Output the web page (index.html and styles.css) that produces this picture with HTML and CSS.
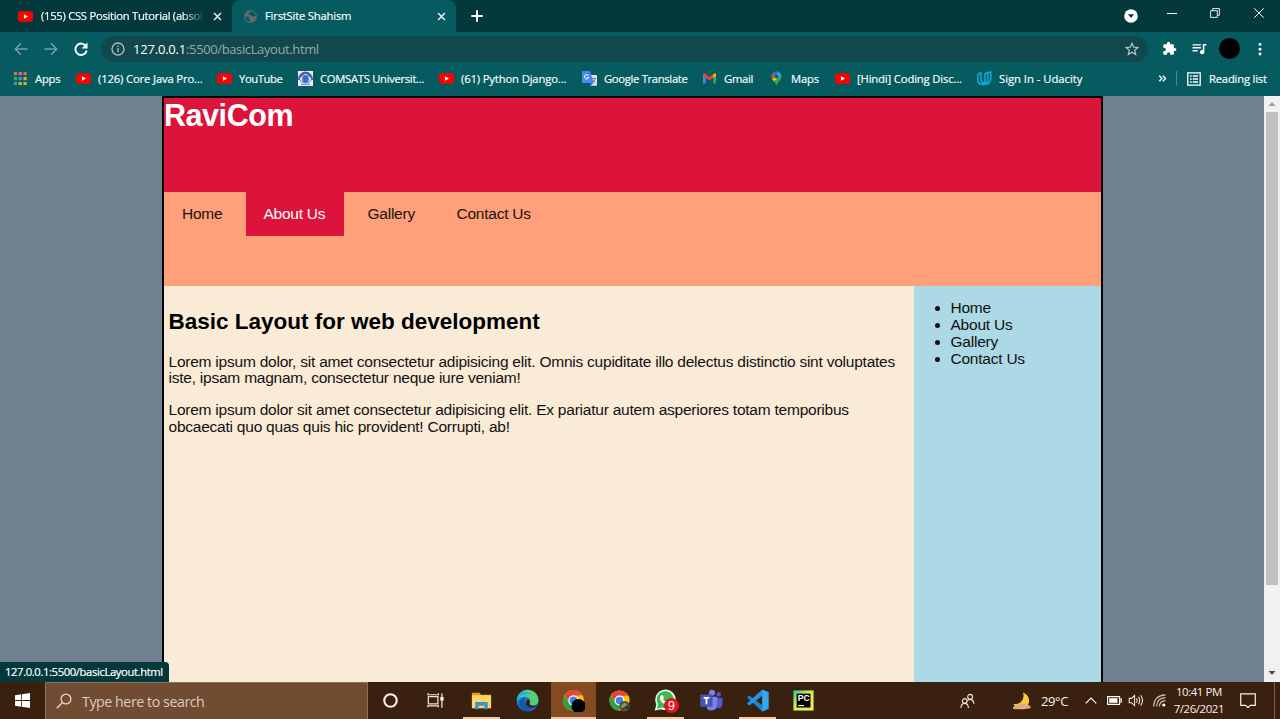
FILE: index.html
```html
<!DOCTYPE html>
<html lang="en">
<head>
<meta charset="utf-8">
<title>FirstSite Shahism</title>
<link rel="stylesheet" href="styles.css">
</head>
<body>
<svg class="defs" width="0" height="0">
  <symbol id="yt" viewBox="0 0 16 16"><rect y="2.4" width="16" height="11.2" rx="3" fill="#f00"/><path d="M6.3 5.5v5l4.3-2.5z" fill="#fff"/></symbol>
  <symbol id="close" viewBox="0 0 10 10"><path d="M1.2 1.2l7.6 7.6M8.8 1.2L1.2 8.8" stroke="#e8f0f0" stroke-width="1.7"/></symbol>
  <symbol id="chrome" viewBox="0 0 24 24"><circle cx="12" cy="12" r="11" fill="#fbc116"/><path d="M2.5 6.5A11 11 0 0 1 21.5 6.5L12 7 7.7 14.5z" fill="#e04a3a"/><path d="M2.500 6.500L7.500 15 12 17.200 16.200 14.500 11 23A11 11 0 0 1 2.500 6.500z" fill="#2da04e"/><circle cx="12" cy="12" r="5.400" fill="#fff"/><circle cx="12" cy="12" r="4.100" fill="#3f82ee"/></symbol>
</svg>
<div class="screen">
  <header class="browser">
    <div class="tabs">
      <div class="tab tab-idle">
        <svg class="ico15"><use href="#yt"/></svg>
        <span class="tab-title fade">(155) CSS Position Tutorial (absol</span>
        <svg class="x"><use href="#close"/></svg>
      </div>
      <div class="tab tab-active">
        <svg class="ico15 globe" viewBox="0 0 16 16"><circle cx="8" cy="8" r="6.900" fill="#616b70"/><path d="M2.400 7.600c2.800.1 4.800.5 4.500 2.200-.2 1 .8 1 .5 3.600C4.700 13.500 2.300 11 2.400 7.600zM8.500 2.300c-1.700.6-.6 2-2.300 2.500-.8.300-.2 1.800 1.200 1.700 1.600-.1 1.600 1.700 3.300 1.500 1.300-.1 1.700-.7 2.900-.6C13.500 4.400 11.300 2.300 8.500 2.300z" fill="#075b60"/></svg>
        <span class="tab-title">FirstSite Shahism</span>
        <svg class="x"><use href="#close"/></svg>
      </div>
      <svg class="plus" viewBox="0 0 12 12"><path d="M6 .3v11.400M.3 6h11.400" stroke="#fff" stroke-width="1.900"/></svg>
      <svg class="win-search" viewBox="0 0 14 14"><circle cx="7" cy="7" r="6.800" fill="#fff"/><path d="M3.900 5.200h6.200L7 9.100z" fill="#043a3e"/></svg>
      <svg class="win-min" viewBox="0 0 10 10"><path d="M0 4.500h10" stroke="#fff"/></svg>
      <svg class="win-max" viewBox="0 0 10 10"><path d="M.6 2.700h6.700v6.700H.6zM2.700 2.500V.6h6.700v6.700H7.500" fill="none" stroke="#fff" stroke-width=".9"/></svg>
      <svg class="win-close" viewBox="0 0 10 10"><path d="M.3.3l9.400 9.400M9.700.3L.3 9.700" stroke="#fff"/></svg>
    </div>
    <div class="toolbar">
      <svg class="nav" viewBox="0 0 14 14"><path d="M13.500 7H1.300M7 1.200L1.200 7 7 12.800" fill="none" stroke="#6f9fa2" stroke-width="1.500"/></svg>
      <svg class="nav" viewBox="0 0 14 14"><path d="M.5 7h12.200M7 1.200L12.800 7 7 12.800" fill="none" stroke="#6f9fa2" stroke-width="1.500"/></svg>
      <svg class="nav" viewBox="0 0 14 14"><path d="M12 4.300A5.700 5.700 0 1 0 12.700 8.500" fill="none" stroke="#fff" stroke-width="1.900"/><path d="M13.500.4v6H7.600z" fill="#fff"/></svg>
      <div class="omnibox">
        <svg class="info" viewBox="0 0 14 14"><circle cx="7" cy="7" r="6" fill="none" stroke="#a9bdbf" stroke-width="1.300"/><path d="M7 6v4.300M7 3.500v1.400" stroke="#a9bdbf" stroke-width="1.400"/></svg>
        <span class="url"><b>127.0.0.1</b>:5500/basicLayout.html</span>
        <svg class="star" viewBox="0 0 14 14"><path d="M7 1.300l1.700 3.900 4.200.3-3.200 2.800 1 4.100L7 10.200l-3.700 2.200 1-4.100L1.100 5.500l4.200-.3z" fill="none" stroke="#b6c8ca" stroke-width="1.200"/></svg>
      </div>
      <svg class="puzzle" viewBox="0 0 24 24"><path d="M20.500 11H19V7a2 2 0 0 0-2-2h-4V3.500a2.500 2.500 0 0 0-5 0V5H4a2 2 0 0 0-2 2v3.800h1.500a2.700 2.700 0 0 1 0 5.400H2V20a2 2 0 0 0 2 2h3.800v-1.500a2.700 2.700 0 0 1 5.400 0V22H17a2 2 0 0 0 2-2v-4h1.500a2.500 2.500 0 0 0 0-5z" fill="#fff"/></svg>
      <svg class="queue" viewBox="0 0 16 13"><path d="M.5 2h9M.5 5.200h9M.5 8.400h5.500" stroke="#fff" stroke-width="1.500"/><path d="M12.400 10V1.900h3" fill="none" stroke="#fff" stroke-width="1.700"/><circle cx="10.800" cy="10" r="2.300" fill="#fff"/></svg>
      <span class="avatar"></span>
      <svg class="kebab" viewBox="0 0 4 14"><circle cx="2" cy="2.400" r="1.450" fill="#fff"/><circle cx="2" cy="7.200" r="1.450" fill="#fff"/><circle cx="2" cy="12" r="1.450" fill="#fff"/></svg>
    </div>
    <div class="bookmarks">
      <svg class="ico15" viewBox="0 0 15 15"><path d="M.8 1h3.300v3.300H.8zM5.600 1h3.300v3.300H5.600zM10.400 1h3.300v3.300h-3.300z" fill="#d96a5e"/><path d="M.8 6h3.300v3.300H.8zM.8 11h3.300v3H.8z" fill="#3ca36b"/><path d="M5.600 6h3.300v3.300H5.600z" fill="#359be0"/><path d="M10.400 6h3.300v3.300h-3.300zM5.600 11h3.300v3H5.600zM10.400 11h3.300v3h-3.300z" fill="#d8ad30"/></svg>
      <span class="bm bm-apps">Apps</span>
      <svg class="ico15"><use href="#yt"/></svg><span class="bm bm-java">(126) Core Java Pro...</span>
      <svg class="ico15"><use href="#yt"/></svg><span class="bm bm-yt">YouTube</span>
      <svg class="ico15" viewBox="0 0 15 15"><path d="M0 0h15v15H0z" fill="#eef1f8"/><path d="M1.300 9a6.200 7.200 0 0 1 12.400 0" fill="none" stroke="#56549b" stroke-width="2.600"/><ellipse cx="7.500" cy="8" rx="6" ry="3.600" fill="#dfe9f8" stroke="#4b74c4"/><circle cx="7.500" cy="8" r="3.300" fill="#326fc2"/><path d="M3 13.300h9" stroke="#8a96c8" stroke-width="1.500"/></svg><span class="bm bm-com">COMSATS Universit...</span>
      <svg class="ico15"><use href="#yt"/></svg><span class="bm bm-py">(61) Python Django...</span>
      <svg class="ico15" viewBox="0 0 15 15"><path d="M6 4h8.200q.8 0 .8.800V14q0 .8-.8.800H8.500z" fill="#dce1e5"/><path d="M.8 0H8l3.600 12H.8Q0 12 0 11.200V.8Q0 0 .8 0z" fill="#4b87ed"/><path d="M6.500 4.700A2.200 2.200 0 1 0 6.700 6.500H4.700" fill="none" stroke="#fff"/><path d="M9.500 7.500h4.500M11.700 6.500v1M13 7.500q-.7 3-2.500 4M10.500 8.500q1 2 3 3" fill="none" stroke="#66808c" stroke-width=".9"/><path d="M8.500 14.800l3-2.800H7.700z" fill="#315ebd"/></svg><span class="bm bm-tr">Google Translate</span>
      <svg class="ico15" viewBox="0 0 15 15"><path d="M1 4v8.500h2.700V5z" fill="#4285f4"/><path d="M11.300 5v7.500H14V4z" fill="#34a853"/><path d="M1 4.500V3.200Q1.500 1.700 3 2.600l4.500 3.500L12 2.600v3.500L7.500 9.500 3.500 6.400z" fill="#ea4335"/><path d="M11.300 3.200Q14 1 14 3.500V5l-2.700 2z" fill="#fbbc04"/></svg><span class="bm bm-gm">Gmail</span>
      <svg class="ico15" viewBox="0 0 15 15"><path d="M7.500.5A5 5 0 0 0 2.500 5.500C2.500 9 6.500 11 7.500 14.700 8.500 11 12.500 9 12.500 5.500A5 5 0 0 0 7.500.5z" fill="#34a853"/><path d="M3.700 2.300L6 4.300 3.200 8A5 5 0 0 1 3.700 2.300z" fill="#ea4335"/><path d="M3.700 2.300A5 5 0 0 1 9.500.9L6 4.700z" fill="#1a73e8"/><path d="M9.500.9A5 5 0 0 1 12 3.500L8.800 7 7.500 4z" fill="#4a91f4"/><path d="M6 6.500L8 8.200 4.600 10 3.200 8z" fill="#fbbc04"/><circle cx="7.500" cy="5.400" r="1.700" fill="#075b60"/></svg><span class="bm bm-mp">Maps</span>
      <svg class="ico15"><use href="#yt"/></svg><span class="bm bm-hi">[Hindi] Coding Disc...</span>
      <svg class="ico15" viewBox="0 0 15 15"><path d="M.9 3.300l3-1.500v7q.1 2.900 2.900 3.300-1.200 1.500-3 1.100Q.9 12.800.9 9.300zM8 2.500l2.900-.8v6.800q-.1 3.400-4 3.600Q8 10.800 8 9zM10.900 1.700l2.900-.8v6.700q-.2 5.500-6.800 6-2 0-3.200-.6" fill="none" stroke="#17a7dc" stroke-width="1.500"/></svg><span class="bm bm-ud">Sign In - Udacity</span>
      <svg class="chev" viewBox="0 0 9 8"><path d="M.8.9L3.900 4 .8 7.100M4.900.9L8 4 4.900 7.100" fill="none" stroke="#fff" stroke-width="1.500"/></svg>
      <i class="sep"></i>
      <svg class="readicon" viewBox="0 0 14 14"><path d="M.8.8h12.400v12.400H.8z" fill="none" stroke="#fff" stroke-width="1.300"/><path d="M3 4h1.700M3 7h1.700M3 10h1.700M5.800 4H11M5.800 7H11M5.800 10H11" stroke="#fff" stroke-width="1.400"/></svg>
      <span class="bm">Reading list</span>
    </div>
  </header>

  <div class="viewport">
    <div class="page">
      <div class="banner"><h1>RaviCom</h1></div>
      <nav class="menu">
        <a class="m-home">Home</a><a class="m-about current">About Us</a><a class="m-gal">Gallery</a><a class="m-con">Contact Us</a>
      </nav>
      <div class="columns">
        <main>
          <h2>Basic Layout for web development</h2>
          <p>Lorem ipsum dolor, sit amet consectetur adipisicing elit. Omnis cupiditate illo delectus distinctio sint voluptates<br>iste, ipsam magnam, consectetur neque iure veniam!</p>
          <p>Lorem ipsum dolor sit amet consectetur adipisicing elit. Ex pariatur autem asperiores totam temporibus<br>obcaecati quo quas quis hic provident! Corrupti, ab!</p>
        </main>
        <aside><ul><li>Home</li><li>About Us</li><li>Gallery</li><li>Contact Us</li></ul></aside>
      </div>
    </div>
    <div class="scrollbar">
      <svg viewBox="0 0 16 16"><path d="M4.500 10h7L8 6z" fill="#a0a0a0"/></svg>
      <i class="thumb"></i>
      <svg viewBox="0 0 16 16"><path d="M4.500 5h7L8 9z" fill="#505050"/></svg>
    </div>
    <div class="status">127.0.0.1:5500/basicLayout.html</div>
  </div>

  <footer class="taskbar">
    <div class="start"><svg viewBox="0 0 15 15" width="15" height="15"><path d="M0 2.200L6.200 1.300V7.100H0zM7 1.200L15 0v7.100H7zM0 7.900h6.200v5.800L0 12.800zM7 7.900h8V15l-8-1.200z" fill="#fff"/></svg></div>
    <div class="search"><svg viewBox="0 0 16 16" width="16" height="16"><circle cx="10" cy="6" r="4.900" fill="none" stroke="#e9dcd2" stroke-width="1.200"/><path d="M6.500 9.500L.8 15.200" stroke="#e9dcd2" stroke-width="1.300"/></svg><span>Type here to search</span></div>
    <div class="app"><svg viewBox="0 0 24 24"><circle cx="12" cy="12" r="6.500" fill="none" stroke="#f6efe9" stroke-width="2.200"/></svg></div>
    <div class="app"><svg viewBox="0 0 24 24"><path d="M4.500 8h10v7.500h-10zM4 4.500v1.500h11V4.500M4 19v-1.500h11V19M18.700 4.500v15" fill="none" stroke="#eee3da" stroke-width="1.300"/><path d="M17 8.500h3.500v3.500H17z" fill="#fff"/></svg></div>
    <div class="app open"><svg viewBox="0 0 24 24"><path d="M2 4h8l1.500 2H22v14H2z" fill="#dfa022"/><path d="M2 6.500h20V20H2z" fill="#fbd568"/><path d="M5.500 21v-7.500h13V21H15v-3.500H9V21z" fill="#3b91d0"/></svg></div>
    <div class="app"><svg viewBox="0 0 24 24"><circle cx="12" cy="12" r="11.300" fill="#167bc8"/><path d="M1 10A11.300 11.300 0 0 1 23.300 12c0 4-4 5.500-7.500 4.500-2-.7-1-2-1-3.500 0-3.500-4-5.500-8-4.500Q3 9 1 13z" fill="#39c5bb"/><path d="M12 .7A11.300 11.300 0 0 1 23.300 12c0 4-4 5.500-7.500 4.500-1.800-.6-1-2-1-3.500C14.800 8 12 5 8 1.500z" fill="#55cf75"/><path d="M1 10.500C3 3 12 1 16.500 6 12 3.500 3 5 1 12z" fill="#28a8df"/><path d="M10.500 9C7 13 10 20.500 18.500 19.300 15 24 8 24.500 4.500 20 1 14 5 9 10.500 9z" fill="#105aa8"/><path d="M11 12c1.500-2.500 3.500-1 3.600.7-.1 2-1 3 .6 4.200 2.500 1.600 5.700.9 7.500-.6-2 3.200-5 3.700-7.500 3.300-4.600-.8-6-4.500-4.200-7.600z" fill="#3b2312"/></svg></div>
    <div class="app open focused"><svg viewBox="0 0 24 24"><use href="#chrome"/><circle cx="17.200" cy="17.800" r="7.400" fill="#000"/></svg></div>
    <div class="app"><svg viewBox="0 0 24 24"><use href="#chrome" width="23" height="23" x=".5" y=".5"/><circle cx="17.300" cy="18" r="5.500" fill="#524d2a"/><path d="M13 18l4-4 3 2-2 6" fill="#87955b"/><path d="M14 21l6-4 2 3" fill="#253524"/></svg></div>
    <div class="app open whats"><svg viewBox="0 0 24 24"><path d="M.8 22.500l1.700-6.300A10.700 10.700 0 1 1 7.500 21z" fill="#f4fff4"/><path d="M3 20.500l1.300-4.500A8.900 8.900 0 1 1 8.200 19.300z" fill="#37bd4c"/><path d="M7.200 6.700l2-.2 1.200 3-1 1.300q1.300 2.300 3.700 3.200l1.400-1.500 2.700 1.400q0 2.700-3 2.900Q7 15.500 6.200 9.500q0-1.800 1-2.800z" fill="#fff"/></svg><b class="badge">9</b></div>
    <div class="app"><svg viewBox="0 0 24 24"><circle cx="12.500" cy="4" r="3.200" fill="#7b83eb"/><circle cx="19.500" cy="5.500" r="2.300" fill="#5059c9"/><path d="M15 9h8.500v6q-.2 5-4.500 5-3 0-4-2z" fill="#5059c9"/><path d="M7 8h11v8q-.5 6.500-6 6.500T7 17z" fill="#7b83eb"/><rect x=".3" y="5.700" width="12.800" height="12.800" rx="1" fill="#4a54b8"/><path d="M3.800 9.300h6M6.800 9.300v6.500" stroke="#fff" stroke-width="1.900"/></svg></div>
    <div class="app open"><svg viewBox="0 0 24 24"><path d="M17 .5L23.500 3.500v17L17 23.500 1 8.800 3.500 6.800 17 17z" fill="#1687cf"/><path d="M17 .5L1 15.200l2.500 2L17 7z" fill="#2196dc"/><path d="M17 .5l6.500 3v17l-6.500 3z" fill="#36a7ed"/></svg></div>
    <div class="app"><svg viewBox="0 0 24 24"><defs><linearGradient id="pc" x1="0" y1="0" x2="1" y2="1"><stop stop-color="#27d28a"/><stop offset=".4" stop-color="#c8ed54"/><stop offset="1" stop-color="#f5ee55"/></linearGradient></defs><path d="M1.500 1.500h21v21h-21z" fill="url(#pc)"/><path d="M4.800 4.800h14.500v14.500H4.800z"/><path d="M6.500 17.300h6" stroke="#fff" stroke-width="1.200"/><text x="6" y="12.800" class="pc">PC</text></svg></div>
    <div class="tray">
      <svg class="people" viewBox="0 0 16 16"><g fill="none" stroke="#efe5de" stroke-width="1.200"><circle cx="5" cy="8" r="2.500"/><path d="M1 15.500q.3-5 4-5t4 5"/><circle cx="10.800" cy="3.500" r="2.600"/><path d="M7.800 8q1-1.700 2.900-1.700 3.700 0 4.200 4.700"/></g></svg>
      <svg class="moon" viewBox="0 0 20 18"><path d="M11 .5c8 3 8 13 1 15.500-5 1.500-9.500-1-10.500-4C9 13 13 7 11 .5z" fill="#fccb36"/><path d="M1 17q-.5-3 3-3 1-2.500 4-1.500 2-2 5 .2 4-.8 6 3-4 2-18 1.300z" fill="#d9ad86"/></svg>
      <span class="temp">29°C</span>
      <svg class="up" viewBox="0 0 12 7"><path d="M.7 6.300L6 1l5.300 5.300" fill="none" stroke="#fff" stroke-width="1.200"/></svg>
      <svg class="battery" viewBox="0 0 15 9"><path d="M.6.6h12v7.800H.6zM13 3h1.300v3H13" fill="none" stroke="#fff" stroke-width="1.100"/><path d="M2.200 2.200h8.300v4.600H2.200z" fill="#fff"/></svg>
      <svg class="sound" viewBox="0 0 16 14"><path d="M.7 4.700h2.500L6.500 1.500v11L3.200 9.300H.7zM8.500 4.700q1.400 2.300 0 4.600M10.700 3q2.600 4 0 8M13 1.300q4 5.700 0 11.400" fill="none" stroke="#f5eee9" stroke-width="1.100"/></svg>
      <svg class="wifi" viewBox="0 0 13 13"><g fill="none" stroke="#cdbfb5" stroke-width="1.200"><path d="M.7 12.500Q1 1.500 12.500.9M3.600 12.500Q3.800 4.200 12.500 3.700M6.400 12.500Q6.500 7 12.500 6.600"/></g><circle cx="10.800" cy="11" r="1.600" fill="#fff"/></svg>
      <div class="clock"><span>10:41 PM</span><span>7/26/2021</span></div>
      <svg class="note" viewBox="0 0 16 16"><path d="M.7.9h14.600v11.500h-5L8 14.700l-2.300-2.300h-5z" fill="none" stroke="#f7efea" stroke-width="1.200"/></svg>
      <i class="peek"></i>
    </div>
  </footer>
</div>
</body>
</html>
```
FILE: styles.css
```css
* { box-sizing: border-box; }
body { margin: 0; overflow: hidden; font-family: "Open Sans", "Noto Sans", sans-serif; }
svg { display: block; flex: none; }
.defs { position: absolute; }
.screen { width: 1280px; height: 719px; display: flex; flex-direction: column; }

/* browser chrome */
.browser { height: 96px; background: #055b60; color: #f4fafa; flex: none; }
.tabs { height: 32px; background: #03393d; display: flex; align-items: center; }
.tab { display: flex; align-items: center; height: 32px; font-size: 11.25px; letter-spacing: -.2px; }
.tab-idle { width: 232px; padding-left: 18px; border-bottom-right-radius: 7px; }
.tab-active { width: 224px; padding-left: 11px; background: #055b60; border-radius: 8px 8px 0 0; }
.ico15 { width: 15px; height: 15px; margin-right: 7px; }
.tab-title { width: 165px; overflow: hidden; white-space: nowrap; flex: none; margin: 0 7px 2px 0; -webkit-text-stroke: .2px; }
.tab-idle .tab-title { margin-left: 1px; letter-spacing: -.28px; }
.fade { -webkit-mask-image: linear-gradient(90deg, #000 86%, transparent 99%); mask-image: linear-gradient(90deg, #000 86%, transparent 99%); }
.x { width: 9px; height: 9px; }
.plus { width: 12px; height: 12px; margin-left: 15px; }
.win-search { width: 14px; height: 14px; margin-left: 641px; }
.win-min { width: 10px; height: 10px; margin: -5px 0 0 29px; }
.win-max { width: 10px; height: 10px; margin: -6px 0 0 33px; }
.win-close { width: 10px; height: 10px; margin: -6px 0 0 34px; }
.toolbar { height: 33px; display: flex; align-items: center; padding-left: 14px; }
.nav { width: 14px; height: 14px; margin-right: 16px; }
.omnibox { width: 1047px; height: 26px; margin-left: -3px; border-radius: 13px; background: #10484d; display: flex; align-items: center; padding: 0 9px 0 10px; }
.info { width: 14px; height: 14px; margin-right: 8px; }
.url { flex: 1; font-size: 13px; color: #93aaac; letter-spacing: -.38px; }
.url b { font-weight: 400; color: #fff; letter-spacing: -.2px; }
.star { width: 14px; height: 14px; }
.puzzle { width: 15px; height: 15px; margin-left: 14px; }
.queue { width: 15px; height: 12px; margin-left: 15px; }
.avatar { width: 21px; height: 21px; border-radius: 50%; background: #000; margin-left: 12px; }
.kebab { width: 4px; height: 14px; margin-left: 18px; }
.bookmarks { height: 28px; display: flex; align-items: center; padding: 0 0 1px 13px; }
.bm { font-size: 11.25px; letter-spacing: -.2px; white-space: nowrap; flex: none; margin-bottom: 1px; -webkit-text-stroke: .2px; }
.bm-apps { width: 41px; }
.bm-java { width: 119px; letter-spacing: -.14px; }
.bm-yt { width: 59px; letter-spacing: -.4px; }
.bm-com { width: 119px; letter-spacing: -.3px; }
.bm-py { width: 121px; letter-spacing: -.14px; }
.bm-tr { width: 98px; letter-spacing: -.32px; }
.bm-gm { width: 45px; letter-spacing: -.3px; }
.bm-mp { width: 44px; }
.bm-hi { width: 120px; letter-spacing: -.15px; }
.bm-ud { width: 159px; letter-spacing: -.02px; }
.chev { width: 9px; height: 7px; }
.sep { width: 1px; height: 15px; background: #4b898c; margin: 0 10px 0 9px; }
.readicon { width: 14px; height: 14px; margin-right: 8px; }

/* document */
.viewport { height: 586px; display: flex; position: relative; background: #708090; overflow: hidden; flex: none; font-family: "Liberation Sans", Arial, sans-serif; }
.page { width: 941px; height: 700px; margin-left: 162px; border: 2px solid #000; flex: none; }
.banner { height: 94px; background: #dc143c; }
h1 { margin: 0; font-size: 30.5px; line-height: 34px; letter-spacing: -.45px; color: #fff; }
.menu { height: 93.500px; background: #ffa07a; display: flex; align-items: flex-start; font-size: 15.5px; letter-spacing: -.24px; color: #201410; }
.menu a { height: 44px; line-height: 44px; padding-left: 18px; white-space: nowrap; }
.m-home { width: 81.500px; }
.m-about { width: 98.500px; }
.m-gal { width: 89px; margin-left: 5.500px; }
.m-con { width: 110px; }
.menu .current { background: #dc143c; color: #fff; }
.columns { display: flex; height: 512px; font-size: 15.500px; line-height: 16.900px; letter-spacing: -.23px; color: #111; }
main { width: 749.500px; background: #faebd7; padding: 0 4.500px; white-space: nowrap; }
aside { flex: 1; background: #add8e6; }
h2 { margin: 22.500px 0 18.500px; font-size: 22.500px; line-height: 27px; letter-spacing: 0; color: #000; }
p { margin: 0 0 15px; }
ul { margin: 14.500px 0 0; padding-left: 37px; }
.scrollbar { width: 16px; margin-left: auto; background: #f1f1f1; display: flex; flex-direction: column; align-items: center; }
.scrollbar svg { width: 16px; height: 16px; }
.thumb { width: 12px; height: 473px; background: #c1c1c1; margin-bottom: auto; }
.status { position: absolute; left: 0; bottom: 0; width: 169px; height: 20px; padding-left: 5px; background: #03393d; color: #fff; border-radius: 0 4px 0 0; font: 11.250px/20px "Open Sans", sans-serif; letter-spacing: -.38px; white-space: nowrap; -webkit-text-stroke: .2px; }

/* taskbar */
.taskbar { height: 37px; background: #3a200f; display: flex; flex: none; color: #f8f1ec; }
.start { width: 45px; display: flex; align-items: center; justify-content: center; }
.search { width: 323px; background: #704c33; border: 1px solid #8d705b; border-bottom: 0; display: flex; align-items: center; padding-left: 10px; gap: 10px; font-size: 14px; letter-spacing: -.42px; color: #dccbbf; flex: none; }
.search span { letter-spacing: -.43px; font-size: 14.200px; }
.app { width: 45px; margin-right: .9px; height: 37px; display: flex; align-items: center; justify-content: center; position: relative; flex: none; left: -.5px; }
.app svg { width: 23px; height: 23px; }
.app.open::after { content: ""; position: absolute; left: 4px; right: 4px; bottom: 0; height: 2px; background: #f8c5a4; }
.focused { background: #844a22; }
.app.focused::after { left: 0; right: 0; }
.badge { position: absolute; left: 21px; top: 16px; width: 15px; height: 15px; border-radius: 50%; background: #e8111b; font: 13px/15px "Liberation Sans", sans-serif; text-align: center; color: #fff; }
.pc { font: bold 9px "Liberation Sans", sans-serif; fill: #fff; }
.tray { display: flex; align-items: center; flex: 1; padding-left: 133px; }
.people { width: 15px; height: 16px; }
.moon { width: 20px; height: 18px; margin-left: 37px; }
.temp { font-size: 13px; letter-spacing: -.35px; width: 44px; margin-left: 9px; white-space: nowrap; }
.up { width: 12px; height: 7px; }
.battery { width: 15px; height: 9px; margin-left: 10px; }
.sound { width: 16px; height: 13px; margin-left: 6px; }
.wifi { width: 13px; height: 13px; margin-left: 9px; }
.clock { width: 60px; margin-left: 3px; display: flex; flex-direction: column; align-items: center; font-size: 11.500px; letter-spacing: -.45px; line-height: 16.500px; white-space: nowrap; }
.note { width: 16px; height: 16px; margin-left: 11px; }
.peek { width: 1px; height: 37px; background: #76614f; margin-left: 18px; }
```
